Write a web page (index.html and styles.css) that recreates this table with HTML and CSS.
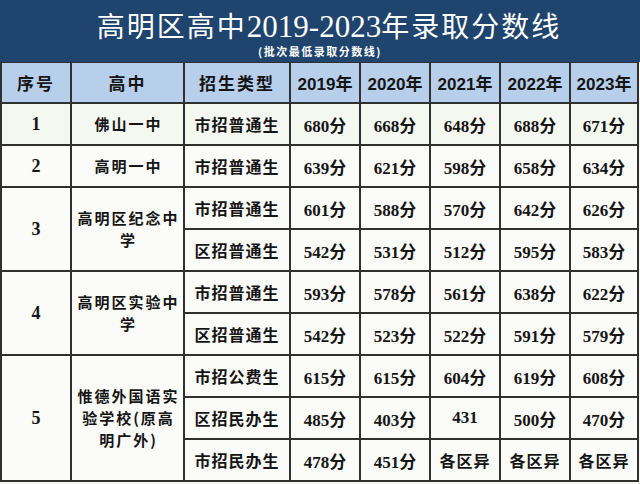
FILE: index.html
```html
<!DOCTYPE html>
<html lang="zh-CN">
<head>
<meta charset="utf-8">
<title>高明区高中2019-2023年录取分数线</title>
<link rel="stylesheet" href="styles.css">
</head>
<body>
<div class="sheet">
  <div class="banner">
    <div class="title">高明区高中<span class="lat">2019-2023</span>年录取分数线</div>
    <div class="sub">(批次最低录取分数线)</div>
  </div>
  <table class="grid">
    <colgroup>
      <col class="c-no"><col class="c-school"><col class="c-type">
      <col class="c-y"><col class="c-y"><col class="c-y"><col class="c-y"><col class="c-y4">
    </colgroup>
    <thead>
      <tr>
        <th class="hz">序号</th><th class="hz">高中</th><th class="hz">招生类型</th>
        <th>2019<span class="nian">年</span></th><th>2020<span class="nian">年</span></th><th>2021<span class="nian">年</span></th><th>2022<span class="nian">年</span></th><th>2023<span class="nian">年</span></th>
      </tr>
    </thead>
    <tbody>
      <tr><td class="no">1</td><td class="school">佛山一中</td><td class="type">市招普通生</td><td>680分</td><td>668分</td><td>648分</td><td>688分</td><td>671分</td></tr>
      <tr><td class="no">2</td><td class="school">高明一中</td><td class="type">市招普通生</td><td>639分</td><td>621分</td><td>598分</td><td>658分</td><td>634分</td></tr>
      <tr><td class="no" rowspan="2">3</td><td class="school" rowspan="2">高明区纪念中<br>学</td><td class="type">市招普通生</td><td>601分</td><td>588分</td><td>570分</td><td>642分</td><td>626分</td></tr>
      <tr><td class="type">区招普通生</td><td>542分</td><td>531分</td><td>512分</td><td>595分</td><td>583分</td></tr>
      <tr><td class="no" rowspan="2">4</td><td class="school" rowspan="2">高明区实验中<br>学</td><td class="type">市招普通生</td><td>593分</td><td>578分</td><td>561分</td><td>638分</td><td>622分</td></tr>
      <tr><td class="type">区招普通生</td><td>542分</td><td>523分</td><td>522分</td><td>591分</td><td>579分</td></tr>
      <tr><td class="no" rowspan="3">5</td><td class="school" rowspan="3">惟德外国语实<br>验学校(原高<br>明广外)</td><td class="type">市招公费生</td><td>615分</td><td>615分</td><td>604分</td><td>619分</td><td>608分</td></tr>
      <tr><td class="type">区招民办生</td><td>485分</td><td>403分</td><td>431</td><td>500分</td><td>470分</td></tr>
      <tr><td class="type">市招民办生</td><td>478分</td><td>451分</td><td class="hz2">各区异</td><td class="hz2">各区异</td><td class="hz2">各区异</td></tr>
    </tbody>
  </table>
</div>
</body>
</html>
```
FILE: styles.css
```css
html, body {
  margin: 0;
  padding: 0;
  background: #d9d9d9;
}
.sheet {
  width: 640px;
  height: 484px;
  overflow: hidden;
  background: #f7f8f5;
}
.banner {
  height: 62px;
  background: #1f446e;
  color: #ffffff;
  display: flex;
  flex-direction: column;
  align-items: center;
  box-sizing: border-box;
  padding-top: 8px;
}
.title {
  font-family: "Noto Sans CJK SC", sans-serif;
  font-size: 28px;
  line-height: 34px;
  letter-spacing: 2px;
  padding-left: 18px;
  font-weight: 400;
}
.title .lat {
  font-family: "Liberation Serif", serif;
  font-size: 31px;
  letter-spacing: 0;
}
.sub {
  font-family: "Noto Sans CJK SC", sans-serif;
  font-size: 11px;
  line-height: 14px;
  font-weight: 700;
  letter-spacing: 1.5px;
}
.grid {
  border-collapse: collapse;
  table-layout: fixed;
  width: 637px;
  color: #151515;
}
.c-no { width: 70px; }
.c-school { width: 113px; }
.c-type { width: 106px; }
.c-y { width: 70px; }
.c-y4 { width: 68px; }
.grid th, .grid td {
  border: 2px solid #303030;
  padding: 0 3px;
  text-align: center;
  vertical-align: middle;
}
.grid th {
  height: 39px;
  background: #b8cfeb;
  font-family: "Liberation Sans", "Noto Sans CJK SC", sans-serif;
  font-size: 17px;
  font-weight: 700;
}
.grid th .nian {
  font-family: "Noto Sans CJK SC", sans-serif;
}
.grid th.hz {
  font-family: "Noto Sans CJK SC", sans-serif;
  letter-spacing: 2px;
}
.grid thead tr th {
  border-top: 1px solid #303030;
}
.grid td {
  height: 40px;
  background: #fbfbf9;
  font-family: "Liberation Serif", "Noto Sans CJK SC", serif;
  font-size: 17px;
  font-weight: 700;
}
.grid td.no {
  font-size: 18px;
}
.grid td.type, .grid td.hz2 {
  font-family: "Noto Sans CJK SC", sans-serif;
  font-size: 16px;
  letter-spacing: 1px;
  line-height: 22px;
}
.grid td.school {
  font-family: "Noto Sans CJK SC", sans-serif;
  font-size: 15px;
  letter-spacing: 2px;
  line-height: 22px;
  padding: 0 1px 0 3px;
}
.grid tbody tr:first-child td {
  background: #f5f7f1;
}
```
